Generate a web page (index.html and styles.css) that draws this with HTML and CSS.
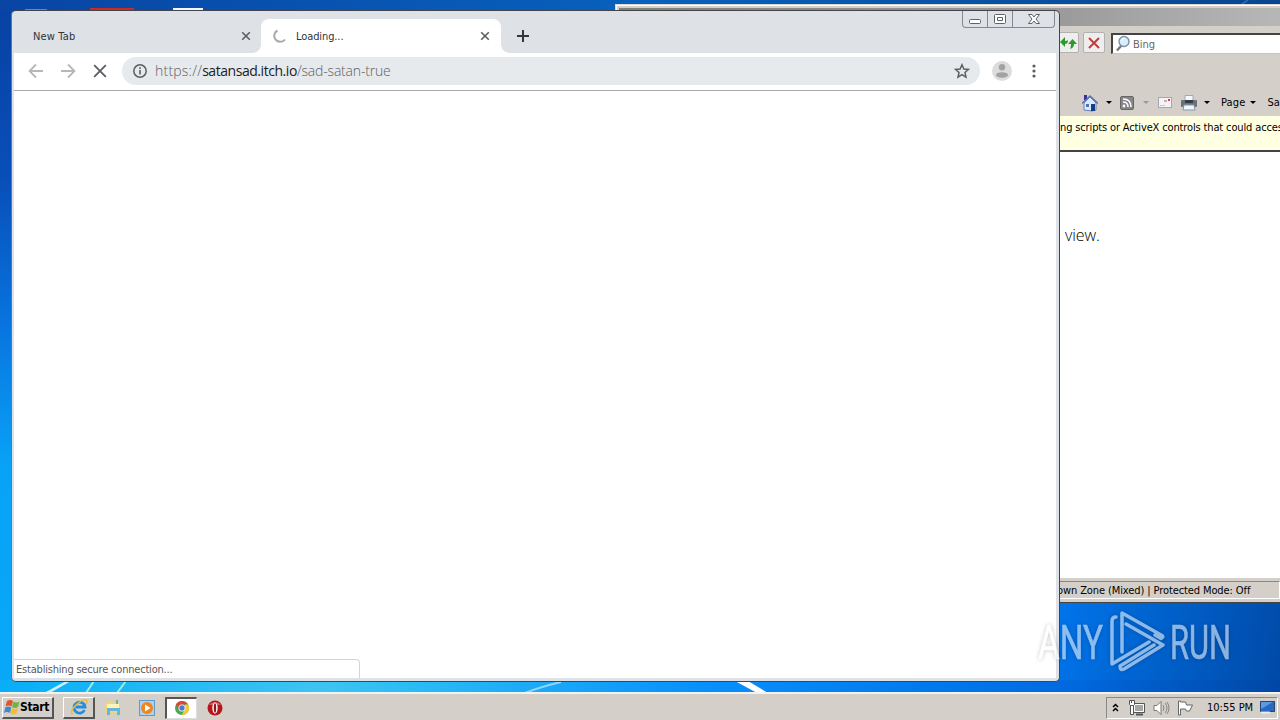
FILE: index.html
```html
<!DOCTYPE html>
<html lang="en">
<head>
<meta charset="UTF-8">
<title>Desktop</title>
<link rel="stylesheet" href="styles.css">
</head>
<body>
<div class="desktop">
    <svg class="wallpaper" width="1280" height="720" viewBox="0 0 1280 720">
        <path d="M25 9h22v2H25z" fill="#5f88c0"/>
        <path d="M90 8h44v4H90z" fill="#cb2b22"/>
        <path d="M173 8h30v3h-30z" fill="#f2f8ff"/>
        <g class="streaks">
            <path d="M44 693L66 681h5L50 693z" fill="#c9f1ff"/>
            <path d="M86 693l8-12M117 693l9-12" stroke="#a5ecdc" stroke-width="2"/>
            <path d="M525 693q15-6 36-11" stroke="#8fd6ff" stroke-width="2" fill="none"/>
            <path d="M735 681h13l20 12h-11z" fill="#fff"/>
        </g>
        <path d="M1242 4l6-4" stroke="#2a68b4" stroke-width="2"/>
    </svg>

    <!-- Internet Explorer -->
    <div class="ie">
        <div class="ie-title"></div>
        <div class="ie-nav">
            <div class="ie-btn">
                <svg width="20" height="18" viewBox="0 0 20 18"><path d="M2 8l5 5v-3q3 0 3-4-1 1-3 1V3zM10 10l4.500-5 4.500 5h-3q0 4-4 5 1-2 1-5z" fill="#2c9b2c"/></svg>
            </div>
            <div class="ie-btn">
                <svg width="18" height="18" viewBox="0 0 18 18"><path d="M4 4l10 10M14 4L4 14" stroke="#c93a3e" stroke-width="2"/></svg>
            </div>
            <div class="ie-search">
                <svg width="18" height="18" viewBox="0 0 18 18"><path d="M6.500 10.500l-4.500 5" stroke="#777" stroke-width="2.4"/><circle cx="9" cy="6.500" r="5" fill="#d6effc" stroke="#7d8fa8" stroke-width="1.4"/><path d="M7 6q0-3 3-3" stroke="#fff" fill="none"/></svg>
                <span>Bing</span>
            </div>
        </div>
        <div class="ie-command">
            <svg class="home" width="16" height="18" viewBox="0 0 16 18"><path d="M2 1h3v5H2z" fill="#392da0"/><path d="M2 9l6-6 6 6v7l-4 1-8-1z" fill="#dceaff" stroke="#6781bc"/><path d="M0 9.500l8-7.500 8 7.500" fill="none" stroke="#5f74b0" stroke-width="1.500"/><path d="M9 10h4v7H9z" fill="#173d83"/><path d="M4 10h3v3H4z" fill="#4774bb"/></svg>
            <i class="caret home-caret"></i>
            <svg class="feed" width="14" height="14" viewBox="0 0 14 14"><rect x=".5" y=".5" width="13" height="13" rx="1.500" fill="#868686" stroke="#666"/><circle cx="4" cy="10" r="1.400" fill="#fff"/><path d="M3 6q5 0 5 5M3 3q8 0 8 8" fill="none" stroke="#fff" stroke-width="1.500"/></svg>
            <i class="caret feed-caret"></i>
            <svg class="mail" width="14" height="11" viewBox="0 0 14 11"><rect x=".5" y=".5" width="13" height="10" fill="#f5f3f5" stroke="#aaa5ad"/><path d="M2 8.500h5" fill="none" stroke="#c9c4cd"/><path d="M6 3h3v2H6z" fill="#d8a6a8"/><path d="M10 2h2v2h-2z" fill="#d34045"/></svg>
            <svg class="print" width="16" height="16" viewBox="0 0 16 16"><path d="M4 .5h8V6H4z" fill="#f4f8fb" stroke="#9faab5"/><rect y="5" width="16" height="7" rx="1" fill="#68727b"/><path d="M4 5h8v3H4z" fill="#343c44"/><path d="M3 10h10l1 5H2z" fill="#f0f6ff" stroke="#8797a8"/></svg>
            <i class="caret print-caret"></i>
            <span class="page">Page</span>
            <i class="caret page-caret"></i>
            <span class="safety">Saf</span>
        </div>
        <div class="ie-info"><span>ng scripts or ActiveX controls that could acces</span></div>
        <div class="ie-body"><span>view.</span></div>
        <div class="ie-status"><div class="zone"><span>own Zone (Mixed) | Protected Mode: Off</span></div></div>
    </div>

    <!-- Chrome -->
    <div class="chrome">
        <div class="tabs">
            <div class="tab">
                <span class="tab-new">New Tab</span>
                <svg width="10" height="10" viewBox="0 0 10 10"><path d="M1.200 1.200l7.600 7.600M8.800 1.200L1.200 8.800" stroke="#5b5e63" stroke-width="1.600"/></svg>
            </div>
            <div class="tab active">
                <svg class="spinner" width="14" height="14" viewBox="0 0 14 14"><path d="M4.500 1.500A6 6 0 1 0 12 10.500" fill="none" stroke="#a8a8a8" stroke-width="2"/></svg>
                <span class="tab-loading">Loading...</span>
                <svg width="10" height="10" viewBox="0 0 10 10"><path d="M1.200 1.200l7.600 7.600M8.800 1.200L1.200 8.800" stroke="#5b5e63" stroke-width="1.600"/></svg>
            </div>
            <svg class="plus" width="12" height="12" viewBox="0 0 12 12"><path d="M6 0v12M0 6h12" stroke="#34363b" stroke-width="2"/></svg>
        </div>
        <div class="controls">
            <div><svg width="14" height="15" viewBox="0 0 14 15"><rect x="1.500" y="8.500" width="11" height="4" rx="1" fill="#fff" stroke="#606269"/></svg></div>
            <div><svg width="14" height="15" viewBox="0 0 14 15"><rect x="1.500" y="3.500" width="11" height="9" rx="1" fill="#fff" stroke="#606269"/><path d="M4.500 6.500h5v3h-5z" fill="none" stroke="#606269"/></svg></div>
            <div><svg width="14" height="15" viewBox="0 0 14 15"><path d="M1.500 3.500h3.500l2 2.500 2-2.500h3.500l-3.500 4.500 3.500 4.500H9L7 10l-2 2.500H1.500L5 8z" fill="#fff" stroke="#606269"/></svg></div>
        </div>
        <div class="toolbar">
            <svg width="16" height="16" viewBox="0 0 16 16"><path d="M15 8H2M8 1.500L1.500 8 8 14.500" fill="none" stroke="#b6b7b9" stroke-width="1.800"/></svg>
            <svg width="16" height="16" viewBox="0 0 16 16"><path d="M1 8h13M8 1.500L14.500 8 8 14.500" fill="none" stroke="#b6b7b9" stroke-width="1.800"/></svg>
            <svg width="16" height="16" viewBox="0 0 16 16"><path d="M2.200 2.200l11.600 11.600M13.800 2.200L2.200 13.800" stroke="#5c5f63" stroke-width="1.900"/></svg>
            <div class="omnibox">
                <svg width="16" height="16" viewBox="0 0 16 16"><circle cx="8" cy="8" r="6.200" fill="none" stroke="#5c5f63" stroke-width="1.500"/><path d="M8 7v4.500M8 4.300v1.700" stroke="#5c5f63" stroke-width="1.600"/></svg>
                <span class="url"><span class="scheme">https://</span><b>satansad.itch.io</b><span class="path">/sad-satan-true</span></span>
                <svg class="star" width="16" height="16" viewBox="0 0 16 16"><path d="M8 1.700l1.900 4.300 4.600.4-3.500 3.100 1 4.600-4-2.400-4 2.400 1-4.600-3.500-3.100 4.600-.4z" fill="none" stroke="#5c5f63" stroke-width="1.500"/></svg>
            </div>
            <svg class="avatar" width="20" height="20" viewBox="0 0 20 20"><circle cx="10" cy="10" r="10" fill="#dcdcdc"/><circle cx="10" cy="6.300" r="3.200" fill="#a2a2a2"/><ellipse cx="10" cy="14" rx="6" ry="2.700" fill="#a2a2a2"/></svg>
            <svg class="menu" width="4" height="14" viewBox="0 0 4 14"><g fill="#5c5f63"><circle cx="2" cy="2" r="1.600"/><circle cx="2" cy="7" r="1.600"/><circle cx="2" cy="12" r="1.600"/></g></svg>
        </div>
        <div class="viewport">
            <div class="bubble"><span>Establishing secure connection...</span></div>
        </div>
    </div>

    <svg class="watermark" width="230" height="70" viewBox="0 0 230 70">
        <text x="8" y="54" textLength="65" lengthAdjust="spacingAndGlyphs">ANY</text>
        <text x="140" y="54" textLength="61" lengthAdjust="spacingAndGlyphs">RUN</text>
        <path d="M92 47V8l40 22.500q2 1.500-1 3L125 30M86 12q-4 0-4 4v43l37-22M96 19l37 21-39 24q-4 2-4-3l5-3 29-18" fill="none" stroke="#fff" stroke-width="3.500" stroke-linejoin="round" stroke-linecap="round"/>
    </svg>

    <div class="taskbar">
        <div class="start">
            <svg width="16" height="16" viewBox="0 0 16 16"><path d="M3 2q3-2 6 0L7.500 7.500q-3-2-6 0z" fill="#e65327"/><path d="M9.500 2.500q3 2 6 0L14 8q-3 2-6 0z" fill="#6fb343"/><path d="M1.300 8.500q3-2 6 0L6 14q-3-2-6 0z" fill="#4188cf"/><path d="M8 9q3 2 6 0l-1.500 5.500q-3 2-6 0z" fill="#f4bc30"/></svg>
            <span>Start</span>
        </div>
        <div class="task raised">
            <svg width="18" height="18" viewBox="0 0 18 18"><path d="M14.500 12A5.500 5.500 0 1 1 15 9H6" fill="none" stroke="#258ddd" stroke-width="2.800"/><path d="M2.500 16.500Q-.5 14 5 8 12 1 16 2q2 1 0 4" fill="none" stroke="#e7bb3b" stroke-width="1.500"/></svg>
        </div>
        <div class="task">
            <svg width="18" height="18" viewBox="0 0 18 18"><path d="M2 4l2-2h4l1 2h7v10H2z" fill="#f0d676"/><path d="M3 5h12v4H3z" fill="#fff4b5"/><path d="M3 16V9h13v7h-3v-4H6v4z" fill="#65b5dc"/><path d="M12 1h2v4h-2z" fill="#7cb46b"/></svg>
        </div>
        <div class="task">
            <svg width="18" height="18" viewBox="0 0 18 18"><rect x="1.500" y="1.500" width="15" height="15" fill="#a9d3f2" stroke="#5f9acb"/><circle cx="9" cy="9" r="6" fill="#ef851d"/><path d="M7 5.500l5.500 3.500L7 12.500z" fill="#fff"/></svg>
        </div>
        <div class="task pressed">
            <svg width="16" height="16" viewBox="0 0 16 16"><circle cx="8" cy="8" r="7" fill="#48a852"/><path d="M1.900 4.500A7 7 0 0 1 14.100 4.500H8L5 9.500z" fill="#dd473b"/><path d="M14.100 4.500A7 7 0 0 1 7.500 15L11 9.500V4.500z" fill="#f5c82f"/><circle cx="8" cy="8" r="3.500" fill="#fff"/><circle cx="8" cy="8" r="2.700" fill="#437ed1"/></svg>
        </div>
        <div class="task">
            <svg width="16" height="16" viewBox="0 0 16 16"><circle cx="8" cy="8" r="7.500" fill="#b5151b"/><path d="M2 5a7 6 0 0 1 12 0z" fill="#d75b5c"/><ellipse cx="8" cy="8" rx="2.700" ry="5.500" fill="#fff"/><ellipse cx="8" cy="8" rx="1.200" ry="4.800" fill="#971117"/></svg>
        </div>
        <div class="tray">
            <svg class="chev" width="7" height="9" viewBox="0 0 7 9"><path d="M1 4l2.500-2.500L6 4M1 8l2.500-2.500L6 8" fill="none" stroke="#000" stroke-width="1.500"/></svg>
            <svg class="net" width="16" height="16" viewBox="0 0 16 16"><path d="M4.500 3.500h11v9h-11z" fill="#a6a6a6" stroke="#555"/><path d="M5.500 4.500h9v7h-9z" fill="none" stroke="#fff"/><path d="M7 14.500h7" stroke="#555" stroke-width="2"/><path d="M.5.500h5v4l-1 1h-3l-1-1zM1.500 5.500h3v9h-3z" fill="#fff" stroke="#555"/><path d="M2.500 0v3" stroke="#555"/></svg>
            <svg class="vol" width="17" height="16" viewBox="0 0 17 16"><path d="M1 5.500h3l4-4v13l-4-4H1z" fill="#fff" stroke="#777"/><path d="M10 5q2 3 0 6M12 3q4 5 0 10M14 2q4 6 0 12" fill="none" stroke="#858585"/></svg>
            <svg class="flag" width="16" height="16" viewBox="0 0 16 16"><path d="M1.500 1v14h2V9h5l1 2h3l3-6h-6l-1-3h-5V1z" fill="#fff" stroke="#666"/></svg>
            <span>10:55 PM</span>
            <svg class="show" width="15" height="13" viewBox="0 0 15 13"><path d="M.5.500h14v10H.5z" fill="#2869bf" stroke="#27436e"/><path d="M1 1h12L1 8z" fill="#5b9be4"/><path d="M1 10.500h9v2H1z" fill="#e3eefb"/></svg>
        </div>
    </div>
</div>
</body>
</html>
```
FILE: styles.css
```css
* {
    box-sizing: border-box;
}
body {
    margin: 0;
    overflow: hidden;
    font-family: "DejaVu Sans Condensed", "DejaVu Sans", sans-serif;
    font-size: 11px;
    color: #000;
}
svg {
    display: block;
    flex: none;
}
span {
    white-space: nowrap;
}
.desktop {
    position: relative;
    width: 1280px;
    height: 720px;
    overflow: hidden;
    background:
        linear-gradient(90deg, #0845a4, #0861bd 50%, #08468f) 0 0 / 100% 12px no-repeat,
        linear-gradient(90deg, #08aef8, #3dc4f2 25%, #2bbcf5 32%, #0890fb 55%, #0075ea 76%, #0068df 84%, #0047a4) 0 680px / 100% 14px no-repeat,
        linear-gradient(#0841a3, #084fb9 25%, #0874df 45%, #08a3f7 65%, #08a9f7) 0 0 / 12px 100% no-repeat,
        linear-gradient(100deg, #0074ea 83%, #0049a6);
}
.wallpaper {
    position: absolute;
    top: 0;
    left: 0;
}
.streaks {
    filter: blur(0.6px);
}

/* Internet Explorer */
.ie {
    position: absolute;
    left: 615px;
    top: 4px;
    width: 665px;
    height: 599px;
    display: flex;
    flex-direction: column;
    background: #d4cfc8;
    border: 1px solid #dedad3;
    border-right: 0;
    border-bottom: 1px solid #444;
    box-shadow: inset 1px 1px #fff;
}
.ie-title {
    height: 18px;
    margin: 3px 0 0 3px;
    background: linear-gradient(90deg, #807e78, #999 65%, #b7b7b7);
}
.ie-nav {
    display: flex;
    height: 51px;
    padding: 6px 0 0 441px;
}
.ie-btn {
    display: flex;
    align-items: center;
    justify-content: center;
    width: 22px;
    height: 21px;
    margin-right: 4px;
    background: #eeeeef;
    border: 1px solid #b1b1b1;
    border-radius: 2px;
}
.ie-search {
    display: flex;
    align-items: center;
    flex: 1;
    height: 21px;
    margin-left: 2px;
    margin-top: 1px;
    padding-left: 2px;
    background: #fff;
    border: 1px solid #c9c5be;
    border-top: 2px solid #444;
    border-left: 2px solid #444;
    border-right: 0;
    color: #666;
}
.ie-command {
    display: flex;
    align-items: center;
    height: 39px;
    padding: 12px 0 0 466px;
}
.home {
    margin-left: 7px;
}
.caret {
    flex: none;
    border: 3px solid transparent;
    border-top-color: #000;
    border-bottom: 0;
}
.home-caret {
    margin: 0 8px 0 0;
}
.ie-command .home {
    margin-right: 1px;
    margin-left: 0;
}
.home-caret {
    margin-left: 7px;
}
.feed-caret {
    border-top-color: #999;
    margin: 0 9px;
}
.print {
    margin-left: 9px;
}
.print-caret {
    margin: 0 11px 0 7px;
}
.page {
    letter-spacing: 0.15px;
}
.page-caret {
    margin: 0 12px 0 4px;
}
.ie-info {
    height: 36px;
    padding: 5px 0 0 444px;
    background: #ffffe1;
    border-bottom: 2px solid #444;
    letter-spacing: -0.14px;
}
.ie-body {
    flex: 1;
    padding: 72px 0 0 449px;
    background: #fff;
    font-family: "Open Sans", sans-serif;
    font-size: 16px;
    font-weight: 300;
    letter-spacing: -0.1px;
}
.ie-status {
    height: 24px;
    padding: 3px 0 2px 430px;
}
.zone {
    display: flex;
    align-items: center;
    height: 18px;
    padding: 1px 0 0 10px;
    border: 1px solid #fff;
    border-top-color: #888;
    letter-spacing: -0.1px;
}

/* Chrome */
.chrome {
    position: absolute;
    left: 11px;
    top: 10px;
    width: 1049px;
    height: 672px;
    display: flex;
    flex-direction: column;
    padding: 0 3px 3px 2px;
    background: #dee1e6;
    border: 1px solid #42454c;
    border-left-color: #67758c;
    border-radius: 5px;
}
.tabs {
    display: flex;
    align-items: flex-end;
    height: 42px;
}
.tab {
    display: flex;
    align-items: center;
    justify-content: space-between;
    width: 247px;
    height: 34px;
    padding: 0 10px 0 19px;
    color: #303438;
}
.tab-new {
    letter-spacing: 0.15px;
}
.active {
    position: relative;
    width: 240px;
    padding: 0 11px 0 12px;
    background: #fff;
    border-radius: 8px 8px 0 0;
}
.active::before,
.active::after {
    content: "";
    position: absolute;
    bottom: 0;
    width: 8px;
    height: 8px;
}
.active::before {
    left: -8px;
    background: radial-gradient(circle at 0 0, transparent 7.500px, #fff 8px);
}
.active::after {
    right: -8px;
    background: radial-gradient(circle at 100% 0, transparent 7.500px, #fff 8px);
}
.tab-loading {
    flex: 1;
    margin-left: 9px;
    letter-spacing: -0.1px;
}
.plus {
    margin: 0 0 11px 16px;
}
.controls {
    position: absolute;
    right: 4px;
    top: 0;
    display: flex;
    height: 17px;
    border: 1px solid #85888f;
    border-top: 0;
    border-radius: 0 0 4px 4px;
}
.controls div {
    display: flex;
    justify-content: center;
    width: 25px;
}
.controls div:first-child {
    width: 24px;
}
.controls div + div {
    border-left: 1px solid #85888f;
}
.controls div:last-child {
    width: 42px;
}
.toolbar {
    display: flex;
    align-items: center;
    gap: 16px;
    height: 38px;
    padding: 0 20px 1px 14px;
    background: #fff;
    border-bottom: 1px solid #aaa;
}
.omnibox {
    display: flex;
    align-items: center;
    width: 858px;
    height: 28px;
    margin-left: -2px;
    padding: 0 10px;
    background: #e7eaed;
    border-radius: 14px;
}
.url {
    flex: 1;
    margin: -2px 0 0 7px;
    font-family: "Open Sans", sans-serif;
    font-size: 14px;
    font-weight: 300;
    color: #5c6166;
}
.url b {
    font-weight: 400;
    letter-spacing: -0.45px;
    color: #202124;
}
.scheme {
    letter-spacing: 0.22px;
}
.path {
    letter-spacing: -0.18px;
}
.avatar {
    margin-left: -4px;
}
.menu {
    margin-left: 4px;
}
.viewport {
    display: flex;
    flex: 1;
    align-items: flex-end;
    background: #fff;
}
.bubble {
    width: 346px;
    height: 19px;
    padding: 3px 0 0 2px;
    border: 1px solid #d4d4d4;
    border-left: 0;
    border-bottom: 0;
    border-top-right-radius: 4px;
    letter-spacing: -0.2px;
    color: #55585c;
}

.watermark {
    position: absolute;
    left: 1030px;
    top: 605px;
    opacity: 0.55;
    filter: drop-shadow(0 0 2px rgba(0, 0, 0, 0.4));
}
.watermark text {
    font-family: Roboto, sans-serif;
    font-size: 49px;
    fill: #fff;
    stroke: #fff;
    stroke-width: 0.6px;
}

/* Taskbar */
.taskbar {
    position: absolute;
    left: 0;
    bottom: 0;
    display: flex;
    align-items: center;
    width: 1280px;
    height: 28px;
    padding: 1px 2px 0;
    background: #d4cfc8;
    border-top: 2px solid #f4f2ee;
}
.start,
.raised {
    border: 1px solid #fff;
    border-right: 2px solid #555;
    border-bottom: 2px solid #555;
}
.start {
    display: flex;
    align-items: center;
    width: 52px;
    height: 22px;
    margin-right: 9px;
    padding-left: 1px;
    font-size: 12px;
    font-weight: bold;
    letter-spacing: -0.3px;
}
.task {
    display: flex;
    align-items: center;
    justify-content: center;
    width: 32px;
    height: 22px;
    margin-right: 2px;
}
.pressed {
    background: #fff;
    border: 1px solid #ddd;
    border-top: 2px solid #555;
    border-left: 2px solid #555;
}
.tray {
    display: flex;
    align-items: center;
    width: 172px;
    height: 22px;
    margin-left: auto;
    padding-left: 5px;
    border: 1px solid #fff;
    border-top-color: #888;
    border-left-color: #888;
}
.net {
    margin-left: 10px;
}
.vol {
    margin-left: 8px;
}
.flag {
    margin: 0 14px 0 7px;
}
.show {
    margin-left: auto;
    margin-right: 2px;
}
```
